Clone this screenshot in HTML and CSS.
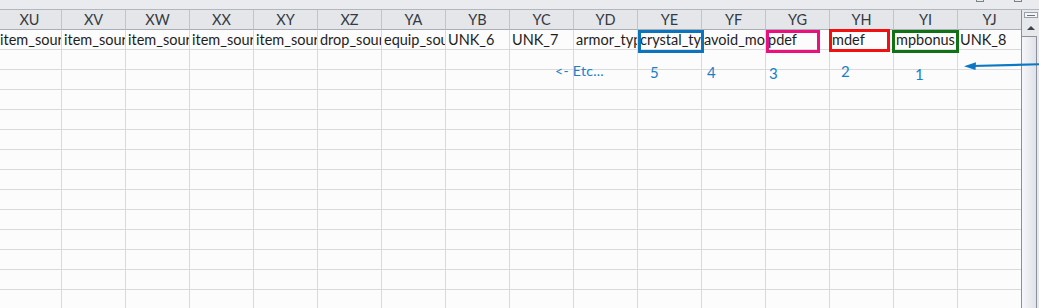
FILE: index.html
```html
<!DOCTYPE html>
<html>
<head>
<meta charset="utf-8">
<link rel="stylesheet" href="styles.css">
</head>
<body>
<div class="topbar">
  <span class="ticon ticon-a"></span>
  <span class="ticon ticon-b"></span>
</div>
<div class="main">
  <div class="sheet">
    <div class="grid">
      <div class="hd">XU</div><div class="hd">XV</div><div class="hd">XW</div><div class="hd">XX</div><div class="hd">XY</div><div class="hd">XZ</div><div class="hd">YA</div><div class="hd">YB</div><div class="hd">YC</div><div class="hd">YD</div><div class="hd">YE</div><div class="hd">YF</div><div class="hd">YG</div><div class="hd">YH</div><div class="hd">YI</div><div class="hd">YJ</div>

      <div class="c">item_sour</div><div class="c">item_sour</div><div class="c">item_sour</div><div class="c">item_sour</div><div class="c">item_sour</div><div class="c">drop_sour</div><div class="c">equip_sou</div><div class="c">UNK_6</div><div class="c">UNK_7</div><div class="c">armor_typ</div><div class="c">crystal_ty</div><div class="c">avoid_mo</div><div class="c">pdef</div><div class="c">mdef</div><div class="c">mpbonus</div><div class="c">UNK_8</div>
    </div>
    <div class="grid empty" id="rows"></div>

    <div class="box box-blue"></div>
    <div class="box box-pink"></div>
    <div class="box box-red"></div>
    <div class="box box-green"></div>

    <div class="note etc">&lt;- Etc...</div>
    <div class="note n5">5</div>
    <div class="note n4">4</div>
    <div class="note n3">3</div>
    <div class="note n2">2</div>
    <div class="note n1">1</div>
  </div>
  <div class="vscroll">
    <div class="split"><span></span></div>
    <div class="uparrow"></div>
    <div class="thumb"></div>
  </div>
  <svg class="arrow" width="76" height="12" viewBox="0 0 76 12">
    <line x1="8" y1="7" x2="76" y2="5.2" stroke="#0b78c4" stroke-width="2.2"/>
    <polygon points="0,7.3 12,3.2 11.5,11" fill="#0b78c4"/>
  </svg>
</div>
<script>
  var r = document.getElementById('rows');
  var h = '';
  for (var i = 0; i < 13 * 16; i++) h += '<div class="c"></div>';
  r.innerHTML = h;
</script>
</body>
</html>
```
FILE: styles.css
```css
html, body {
  margin: 0;
  padding: 0;
  width: 1039px;
  height: 308px;
  overflow: hidden;
  background: #fcfcfc;
  font-family: Lato, "Open Sans", sans-serif;
}

.topbar {
  height: 10px;
  background: #e9ebee;
  border-bottom: 1px solid #b3b7bd;
  box-sizing: border-box;
  position: relative;
}
.ticon {
  position: absolute;
  top: -4px;
  width: 8px;
  height: 6px;
  border: 1px solid #7d8288;
  box-sizing: border-box;
}
.ticon-a { left: 976px; }
.ticon-b { left: 1014px; }

.main {
  display: flex;
  height: 298px;
  position: relative;
}

.sheet {
  position: relative;
  width: 1021px;
  overflow: hidden;
}

.grid {
  display: grid;
  grid-template-columns: repeat(16, 64px);
  margin-left: -2px;
}

.hd {
  height: 20px;
  box-sizing: border-box;
  background: #e4e6ea;
  border-right: 1px solid #c1c5ca;
  border-bottom: 1px solid #a9aeb5;
  text-align: center;
  font-size: 14.5px;
  line-height: 19px;
  color: #353a42;
}

.c {
  height: 20px;
  box-sizing: border-box;
  border-right: 1px solid #dadada;
  border-bottom: 1px solid #dadada;
  font-size: 14.5px;
  line-height: 20px;
  padding-left: 2px;
  color: #1e1e1e;
  white-space: nowrap;
  overflow: hidden;
}

.box {
  position: absolute;
  box-sizing: border-box;
  border: 3px solid;
}
.box-blue  { left: 638px; top: 20px; width: 66px; height: 23px; border-color: #0a74bd; }
.box-pink  { left: 766px; top: 20px; width: 54px; height: 23px; border-color: #ea117f; }
.box-red   { left: 829px; top: 19px; width: 61px; height: 23px; border-color: #f01010; }
.box-green { left: 892px; top: 20px; width: 67px; height: 23px; border-color: #117215; }

.note {
  position: absolute;
  font-size: 15px;
  line-height: 18px;
  color: #1680c8;
}
.etc { left: 555px; top: 52px; font-size: 14px; letter-spacing: 0.3px; }
.n5 { left: 650px; top: 53px; }
.n4 { left: 707px; top: 53px; }
.n3 { left: 769px; top: 54px; }
.n2 { left: 841px; top: 52px; }
.n1 { left: 915px; top: 55px; }

.arrow {
  position: absolute;
  left: 964px;
  top: 49px;
  overflow: visible;
}

.vscroll {
  width: 18px;
  background: #e6e8ec;
  border-left: 1px solid #8a9099;
  box-sizing: border-box;
  display: flex;
  flex-direction: column;
  align-items: center;
}
.split {
  margin-top: 2px;
  width: 14px;
  height: 6px;
  border: 1px solid #9aa0a8;
  background: #f4f5f7;
  box-sizing: border-box;
  display: flex;
  align-items: center;
  justify-content: center;
}
.split span {
  width: 8px;
  height: 1px;
  background: #6d737b;
}
.uparrow {
  margin-top: 8px;
  width: 0;
  height: 0;
  border-left: 4px solid transparent;
  border-right: 4px solid transparent;
  border-bottom: 4px solid #3d4148;
}
.thumb {
  margin-top: 6px;
  align-self: flex-start;
  width: 15px;
  flex: 1;
  box-sizing: border-box;
  border: 1px solid #8c929b;
  border-left: none;
  border-bottom: none;
  background: linear-gradient(to right, #f6f7f9, #dfe2e8);
}
```
